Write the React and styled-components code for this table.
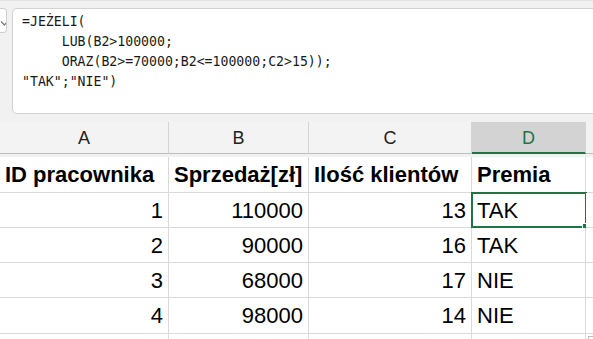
import React from "react";
import styled, { createGlobalStyle, css } from "styled-components";

const GlobalStyle = createGlobalStyle`
  html, body {
    margin: 0;
    padding: 0;
    background: #f1f1f1;
  }
`;

const Sheet = styled.div`
  width: 593px;
  height: 339px;
  overflow: hidden;
  background: #f1f1f1;
  display: flex;
  flex-direction: column;
  border-top: 1px solid #e2e2e2;
  box-sizing: border-box;
`;

const FormulaRow = styled.div`
  display: flex;
  align-items: flex-start;
  gap: 5px;
  padding-top: 7px;
  height: 113px;
  box-sizing: border-box;
`;

const ConfirmStub = styled.div`
  width: 7px;
  height: 25px;
  flex: none;
  background: #fff;
  border: 1px solid #cfcfcf;
  border-left: none;
  border-radius: 0 4px 4px 0;
  box-sizing: border-box;
  overflow: hidden;
  display: flex;
  justify-content: flex-end;
  align-items: center;
`;

const FormulaBox = styled.pre`
  flex: 1;
  margin: 0 -12px 0 0;
  height: 106px;
  box-sizing: border-box;
  background: #fff;
  border: 1px solid #d2d2d2;
  border-radius: 5px;
  padding: 3px 9px;
  font-family: "DejaVu Sans Mono", "Liberation Mono", monospace;
  font-size: 13.2px;
  line-height: 20px;
  color: #1a1a1a;
`;

const Grid = styled.div`
  margin-top: 8px;
  display: grid;
  grid-template-columns: 169px 140px 163px 114px 1fr;
  grid-auto-rows: 35.25px;
  font-family: "Liberation Sans", Arial, sans-serif;
`;

const ColumnHeader = styled.div`
  height: 32px;
  box-sizing: border-box;
  display: flex;
  align-items: center;
  justify-content: center;
  padding-top: 2px;
  font-size: 18px;
  color: #222;
  background: #f3f3f3;
  border-right: 1px solid #d4d4d4;
  border-bottom: 1px solid #bcbcbc;

  ${(p) =>
    p.$active &&
    css`
      background: #d3d3d3;
      color: #217346;
      border-bottom: 2px solid #217346;
    `}
`;

const Cell = styled.div`
  position: relative;
  box-sizing: border-box;
  display: flex;
  align-items: center;
  justify-content: ${(p) => (p.$align === "right" ? "flex-end" : "flex-start")};
  padding: 2px 5px 0 5px;
  background: #fff;
  border-right: 1px solid #dadada;
  border-bottom: 1px solid #dadada;
  font-size: 22px;
  font-weight: ${(p) => (p.$bold ? 700 : 400)};
  color: #000;
  white-space: nowrap;
`;

const Selection = styled.div`
  position: absolute;
  left: -1px;
  top: -1px;
  right: -2px;
  bottom: -1px;
  border: 2px solid #217346;
  pointer-events: none;

  &::after {
    content: "";
    position: absolute;
    right: -4px;
    bottom: -4px;
    width: 5px;
    height: 5px;
    background: #217346;
    border: 1px solid #fff;
  }
`;

const QuickIcon = styled.div`
  position: absolute;
  left: 2px;
  top: 2px;
  width: 9px;
  height: 9px;
  border: 1px solid #bdbdbd;
  background: #fff;
  display: flex;
  align-items: center;
  justify-content: center;

  &::before {
    content: "";
    width: 5px;
    height: 5px;
    background: #3f6fd1;
  }
`;

const formula = `=JEŻELI(
     LUB(B2>100000;
     ORAZ(B2>=70000;B2<=100000;C2>15));
"TAK";"NIE")`;

const columns = ["A", "B", "C", "D", ""];

const rows = [
  { id: "1", sales: "110000", clients: "13", bonus: "TAK" },
  { id: "2", sales: "90000", clients: "16", bonus: "TAK" },
  { id: "3", sales: "68000", clients: "17", bonus: "NIE" },
  { id: "4", sales: "98000", clients: "14", bonus: "NIE" },
];

export default function App() {
  return (
    <>
      <GlobalStyle />
      <Sheet>
        <FormulaRow>
          <ConfirmStub>
            <svg width="14" height="12" viewBox="0 0 14 12" style={{ flex: "none", marginRight: -7 }}>
              <path d="M2 6.5 L5.5 10 L12 2" fill="none" stroke="#777" strokeWidth="1.2" />
            </svg>
          </ConfirmStub>
          <FormulaBox>{formula}</FormulaBox>
        </FormulaRow>

        <Grid>
          {columns.map((c, i) => (
            <ColumnHeader key={i} $active={c === "D"}>
              {c}
            </ColumnHeader>
          ))}

          <Cell $bold>ID pracownika</Cell>
          <Cell $bold>Sprzedaż[zł]</Cell>
          <Cell $bold>Ilość klientów</Cell>
          <Cell $bold>Premia</Cell>
          <Cell />

          {rows.map((r, i) => (
            <React.Fragment key={r.id}>
              <Cell $align="right">{r.id}</Cell>
              <Cell $align="right">{r.sales}</Cell>
              <Cell $align="right">{r.clients}</Cell>
              <Cell>
                {r.bonus}
                {i === 0 && <Selection />}
              </Cell>
              <Cell />
            </React.Fragment>
          ))}

          <Cell />
          <Cell />
          <Cell />
          <Cell />
          <Cell>
            <QuickIcon />
          </Cell>
        </Grid>
      </Sheet>
    </>
  );
}
